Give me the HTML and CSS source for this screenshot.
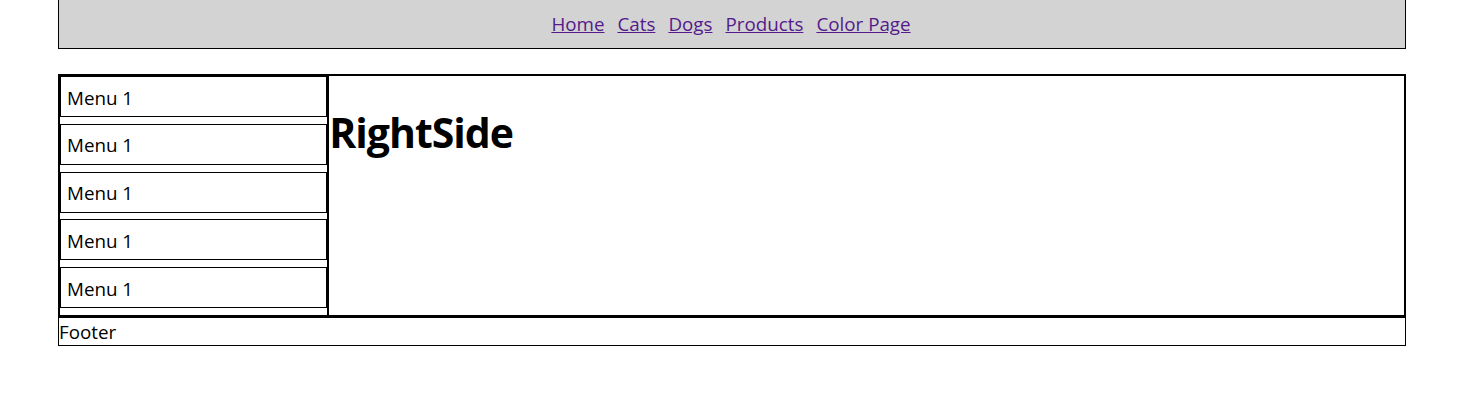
FILE: index.html
```html
<!DOCTYPE html>
<html lang="en">
<head>
<meta charset="utf-8">
<title>Layout</title>
<link rel="stylesheet" href="styles.css">
</head>
<body>
<div class="page">
  <header class="header">
    <nav class="topnav">
      <a href="#" class="link">Home</a>
      <a href="#" class="link">Cats</a>
      <a href="#" class="link">Dogs</a>
      <a href="#" class="link">Products</a>
      <a href="#" class="link">Color Page</a>
    </nav>
  </header>
  <main class="main">
    <aside class="side">
      <div class="item">Menu 1</div>
      <div class="item">Menu 1</div>
      <div class="item">Menu 1</div>
      <div class="item">Menu 1</div>
      <div class="item">Menu 1</div>
    </aside>
    <section class="content">
      <h1 class="title">RightSide</h1>
    </section>
  </main>
  <footer class="footer">Footer</footer>
</div>
</body>
</html>
```
FILE: styles.css
```css
html, body {
  margin: 0;
  padding: 0;
  background: #fff;
}
body {
  font-family: "Open Sans", "Noto Sans", sans-serif;
  font-size: 18.8px;
  color: #000;
}
.page {
  margin: 0 56px 0 58px;
}
.header {
  height: 48px;
  background: #d3d3d3;
  border: 1px solid #000;
  border-top: 0;
  display: flex;
  align-items: center;
  justify-content: center;
}
.topnav {
  display: flex;
  gap: 13px;
  line-height: 26px;
  margin-left: -2px;
}
.link {
  color: #551a8b;
  text-decoration: underline;
}
.main {
  margin-top: 25px;
  border: 1px solid #000;
  display: flex;
}
.side {
  width: 20%;
  box-sizing: border-box;
  border: 1px solid #000;
  display: flex;
  flex-direction: column;
  height: 241px;
}
.item {
  box-sizing: border-box;
  height: 41px;
  border: 1px solid #000;
  margin-bottom: 6.8px;
  padding: 0 6px;
  display: flex;
  align-items: center;
  padding-top: 2px;
}
.content {
  flex: 1;
  border: 1px solid #000;
}
.title {
  margin: 29px 0 0 0;
  font-size: 41px;
  letter-spacing: -1px;
  line-height: 54px;
  font-weight: 700;
}
.footer {
  border: 1px solid #000;
  line-height: 25px;
  padding-top: 2px;
}
```
